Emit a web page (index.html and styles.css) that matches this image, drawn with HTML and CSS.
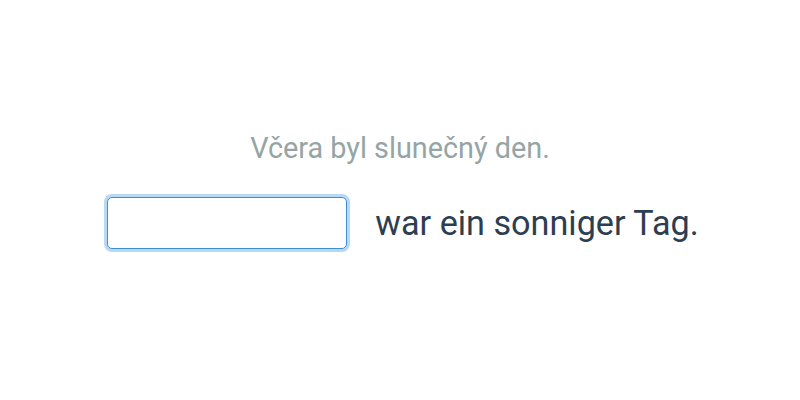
FILE: index.html
```html
<!DOCTYPE html>
<html lang="cs">
<head>
<meta charset="utf-8">
<link rel="stylesheet" href="styles.css">
</head>
<body>
<main class="exercise">
  <p class="prompt">Včera byl slunečný den.</p>
  <div class="answer-row">
    <input class="answer-input" type="text" aria-label="Antwort">
    <span class="sentence">war ein sonniger Tag.</span>
  </div>
</main>
</body>
</html>
```
FILE: styles.css
```css
html, body {
  margin: 0;
  padding: 0;
  background: #ffffff;
}
body {
  width: 800px;
  height: 400px;
  font-family: Roboto, "Liberation Sans", sans-serif;
}
.exercise {
  box-sizing: border-box;
  height: 400px;
  padding-bottom: 20px;
  display: flex;
  flex-direction: column;
  align-items: center;
  justify-content: center;
  gap: 32px;
}
.prompt {
  margin: 0;
  font-size: 28.8px;
  color: #95a5a6;
}
.answer-row {
  display: flex;
  align-items: center;
  gap: 28px;
  padding-left: 6px;
}
.answer-input {
  box-sizing: border-box;
  width: 240px;
  height: 52px;
  border: 1px solid #3d8fd6;
  border-radius: 5px;
  box-shadow: 0 0 0 3px #b8d9f5;
  outline: none;
  font-size: 28px;
  font-family: inherit;
  padding: 0 10px;
}
.sentence {
  font-size: 34.2px;
  color: #2c3e50;
}
```
